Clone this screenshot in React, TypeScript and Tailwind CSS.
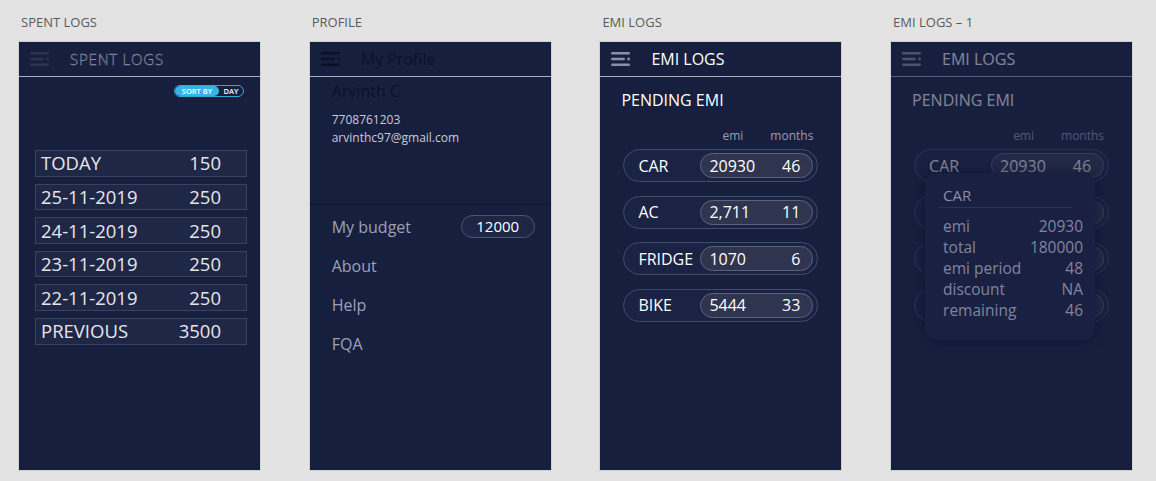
import React from "react";

function Burger({ color }: { color: string }) {
  return (
    <svg width="19" height="14" viewBox="0 0 19 14" fill={color}>
      <rect x="0" y="0" width="19" height="2.6" rx="1.3" />
      <rect x="0" y="5.7" width="14" height="2.6" rx="1.3" />
      <circle cx="17.6" cy="7" r="1.4" />
      <rect x="0" y="11.4" width="19" height="2.6" rx="1.3" />
    </svg>
  );
}

function Header({ children, icon }: { children: React.ReactNode; icon: string }) {
  return (
    <div className="h-[35px] shrink-0 border-b border-[#aeb0c0] flex items-center pl-[11px]">
      <Burger color={icon} />
      <div className="ml-[21px] flex items-center">{children}</div>
    </div>
  );
}

function Column({ label, children }: { label: string; children: React.ReactNode }) {
  return (
    <div className="w-[243px] flex flex-col">
      <div className="h-[18px] leading-[18px] text-[13px] text-[#5a5a5a] pl-[3px]">{label}</div>
      <div className="mt-[10px] h-[430px] border border-[#cfd0d4] bg-[#171f3f] flex flex-col relative overflow-hidden">
        {children}
      </div>
    </div>
  );
}

const spent = [
  ["TODAY", "150"],
  ["25-11-2019", "250"],
  ["24-11-2019", "250"],
  ["23-11-2019", "250"],
  ["22-11-2019", "250"],
  ["PREVIOUS", "3500"],
];

function SpentLogs() {
  return (
    <>
      <Header icon="#2c3352">
        <span className="text-[15px] font-light tracking-[0.8px] text-[#171f3f] [-webkit-text-stroke:0.45px_#8e92a4]">SPENT LOGS</span>
      </Header>
      <div className="flex justify-end pr-[16px] mt-[8px]">
        <div className="h-[12px] w-[70px] rounded-full border border-[#2fa9d9] flex items-center overflow-hidden">
          <div className="h-full w-[44px] rounded-full bg-[#37b4e6] text-white text-[7.5px] leading-[10px] flex items-center justify-center font-semibold">
            SORT BY
          </div>
          <div className="flex-1 text-white text-[7.5px] leading-[10px] text-center font-semibold">DAY</div>
        </div>
      </div>
      <div className="mt-[53px] pl-[16px] pr-[13px] flex flex-col gap-[7px]">
        {spent.map(([l, v]) => (
          <div
            key={l}
            className="h-[26.6px] bg-[#1f2747] border border-[#3a4162] flex items-center justify-between pl-[5px] pr-[25px] text-[18.5px] text-[#e6e6ea]"
          >
            <span>{l}</span>
            <span>{v}</span>
          </div>
        ))}
      </div>
    </>
  );
}

function Profile() {
  return (
    <>
      <Header icon="#0c1026">
        <span className="text-[16px] text-[#0c1026]">My Profile</span>
      </Header>
      <div className="h-[128px] border-b border-[#10162d] pl-[22px] pt-[4px] flex flex-col">
        <div className="text-[16px] leading-[20px] text-[#0c1026]">Arvinth C</div>
        <div className="mt-[10px] text-[12px] leading-[18px] text-[#c9cbd6]">7708761203</div>
        <div className="text-[12px] leading-[18px] text-[#c9cbd6]">arvinthc97@gmail.com</div>
      </div>
      <div className="mt-[2px] pl-[22px] pr-[16px] flex flex-col text-[16px] text-[#9da1b6]">
        <div className="h-[39px] flex items-center justify-between">
          <span>My budget</span>
          <span className="h-[23px] w-[74px] rounded-full border border-[#50566f] bg-[#1e2646] text-white text-[15px] flex items-center justify-center">
            12000
          </span>
        </div>
        <div className="h-[39px] flex items-center">About</div>
        <div className="h-[39px] flex items-center">Help</div>
        <div className="h-[39px] flex items-center">FQA</div>
      </div>
    </>
  );
}

const emis = [
  ["CAR", "20930", "46"],
  ["AC", "2,711", "11"],
  ["FRIDGE", "1070", "6"],
  ["BIKE", "5444", "33"],
];

function EmiLogs() {
  return (
    <>
      <Header icon="#8a8ea8">
        <span className="text-[16px] text-white">EMI LOGS</span>
      </Header>
      <div className="pl-[21px] pt-[12px] text-[16px] leading-[22px] text-white">PENDING EMI</div>
      <div className="mt-[17px] flex justify-end gap-[27px] pr-[28px] text-[12px] leading-[16px] text-[#9a9eb2]">
        <span>emi</span>
        <span>months</span>
      </div>
      <div className="mt-[5px] px-[23px] flex flex-col gap-[13.5px]">
        {emis.map(([l, v, m]) => (
          <div
            key={l}
            className="h-[33px] rounded-full border border-[#444a69] bg-[#1b2344] flex items-center justify-between pl-[14px] pr-[4px]"
          >
            <span className="text-[16px] text-white">{l}</span>
            <div className="h-[25px] w-[113px] rounded-full border border-[#5d627b] bg-[#2f354f] flex items-center justify-between pl-[8px] pr-[12px] text-[16px] text-white">
              <span>{v}</span>
              <span>{m}</span>
            </div>
          </div>
        ))}
      </div>
    </>
  );
}

const details = [
  ["emi", "20930"],
  ["total", "180000"],
  ["emi period", "48"],
  ["discount", "NA"],
  ["remaining", "46"],
];

function EmiLogsDetail() {
  return (
    <>
      <EmiLogs />
      <div className="absolute inset-0 bg-[#171f3f]/55" />
      <div className="absolute left-[34px] top-[131px] w-[170px] h-[167px] rounded-[12px] bg-[#192042] shadow-[0_0_12px_rgba(5,8,25,0.45)] pt-[12px]">
        <div className="ml-[14px] mr-[23px] pl-[4px] border-b border-[#2b3254] text-[15px] leading-[20px] pb-[2px] text-[#8a8fa6]">
          CAR
        </div>
        <div className="mt-[8px] pl-[18px] pr-[12px] flex flex-col text-[15.5px] leading-[21px] text-[#80859f]">
          {details.map(([l, v]) => (
            <div key={l} className="flex justify-between">
              <span>{l}</span>
              <span>{v}</span>
            </div>
          ))}
        </div>
      </div>
    </>
  );
}

export default function App() {
  return (
    <div className="w-[1156px] h-[481px] bg-[#e3e3e3] font-['Open_Sans',sans-serif] pl-[18px] pt-[13px] flex gap-[47.7px] overflow-hidden">
      <Column label="SPENT LOGS">
        <SpentLogs />
      </Column>
      <Column label="PROFILE">
        <Profile />
      </Column>
      <Column label="EMI LOGS">
        <EmiLogs />
      </Column>
      <Column label="EMI LOGS – 1">
        <EmiLogsDetail />
      </Column>
    </div>
  );
}
